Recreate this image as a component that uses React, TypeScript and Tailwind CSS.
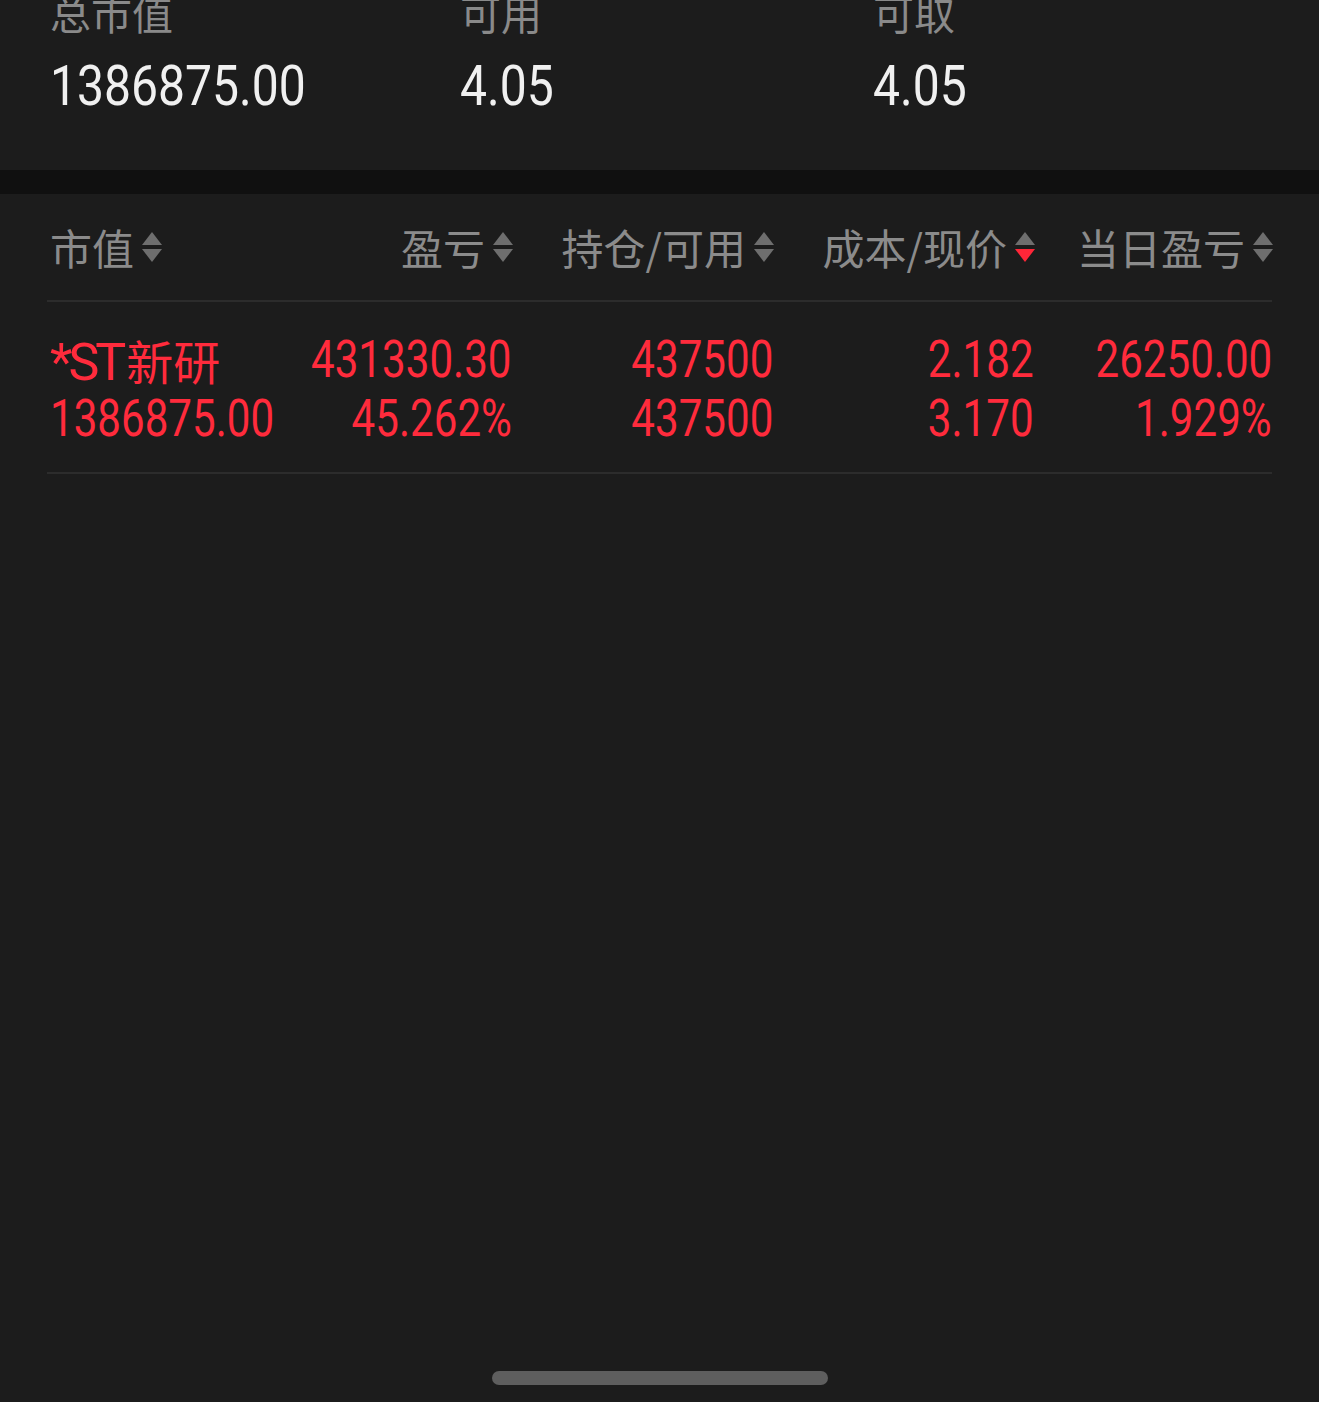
import React from 'react';

const NUM_FONT = "'Roboto', 'Noto Sans CJK SC', sans-serif";
const CJK_FONT = "'Noto Sans CJK SC', 'Noto Sans', sans-serif";

type SortState = 'none' | 'desc';

/* Stacked up/down triangles next to a column title. */
function SortIcon({ state = 'none' }: { state?: SortState }) {
  return (
    <svg width="22" height="36" viewBox="0 0 22 36" className="mr-[-2px] ml-[7px] shrink-0">
      <path d="M11 3 L21 16 L1 16 Z" fill="#6e6e6e" />
      <path d="M1 20 L21 20 L11 33 Z" fill={state === 'desc' ? '#ff2638' : '#6e6e6e'} />
    </svg>
  );
}

function HeaderCell({
  label,
  state,
  align = 'right',
}: {
  label: string;
  state?: SortState;
  align?: 'left' | 'right';
}) {
  return (
    <div className={`flex items-center ${align === 'left' ? 'justify-start' : 'justify-end'}`}>
      <span className="text-[42px] leading-[48px] text-[#8b8b8b]" style={{ fontFamily: CJK_FONT }}>
        {label}
      </span>
      <SortIcon state={state} />
    </div>
  );
}

const summary = [
  { label: '总市值', value: '1386875.00' },
  { label: '可用', value: '4.05' },
  { label: '可取', value: '4.05' },
];

const position = {
  code: '*ST',
  short: '新研',
  marketValue: '1386875.00',
  pnl: '431330.30',
  pnlPct: '45.262%',
  hold: '437500',
  avail: '437500',
  cost: '2.182',
  price: '3.170',
  dayPnl: '26250.00',
  dayPct: '1.929%',
};

// the app uses a condensed DIN face; squeeze Roboto to get the same proportions
function Num({ children, left = false }: { children: React.ReactNode; left?: boolean }) {
  return (
    <span className={`inline-block scale-x-[0.81] ${left ? 'origin-left' : 'origin-right'}`}>{children}</span>
  );
}

function Cell({ top, bottom }: { top: string; bottom: string }) {
  return (
    <div className="flex flex-col items-end">
      <div className="h-[59px] whitespace-nowrap text-[52px] leading-[59px]">
        <Num>{top}</Num>
      </div>
      <div className="h-[59px] whitespace-nowrap text-[52px] leading-[59px]">
        <Num>{bottom}</Num>
      </div>
    </div>
  );
}

export default function App() {
  return (
    <div className="flex h-[1402px] w-[1319px] flex-col overflow-hidden bg-[#1c1c1c]">
      {/* account summary, top clipped by the scroll position */}
      <div className="h-[170px] shrink-0 pl-[50px]">
        <div className="grid grid-cols-[410px_413px_1fr]">
          {summary.map((s) => (
            <div key={s.label} className="flex flex-col">
              <div
                className="mt-[-12px] h-[48px] text-[41px] leading-[48px] text-[#8a8a8a]"
                style={{ fontFamily: CJK_FONT }}
              >
                {s.label}
              </div>
              <div
                className="mt-[22px] h-[56px] whitespace-nowrap text-[56px] leading-[56px] text-[#f0f0f0]"
                style={{ fontFamily: NUM_FONT }}
              >
                <span className="inline-block origin-left scale-x-[0.858]">{s.value}</span>
              </div>
            </div>
          ))}
        </div>
      </div>

      <div className="h-[24px] shrink-0 bg-[#101010]" />

      {/* positions table */}
      <div className="px-[47px]">
        <div className="grid h-[108px] grid-cols-[262px_200px_261px_261px_1fr] items-center border-b-2 border-[#2c2c2c] pl-[3px]">
          <HeaderCell label="市值" align="left" />
          <HeaderCell label="盈亏" />
          <HeaderCell label="持仓/可用" />
          <HeaderCell label="成本/现价" state="desc" />
          <HeaderCell label="当日盈亏" />
        </div>

        <div
          className="grid grid-cols-[262px_200px_261px_261px_1fr] border-b-2 border-[#2c2c2c] pt-[28px] pb-[24px] pl-[3px] text-[#ff2b3c]"
          style={{ fontFamily: NUM_FONT }}
        >
          <div className="flex flex-col items-start">
            <div className="flex h-[59px] items-baseline whitespace-nowrap leading-[59px]">
              <span className="text-[52px] tracking-[-4px]">{position.code}</span>
              <span className="ml-[4px] text-[47px]" style={{ fontFamily: CJK_FONT }}>
                {position.short}
              </span>
            </div>
            <div className="h-[59px] whitespace-nowrap text-[52px] leading-[59px]">
              <Num left>{position.marketValue}</Num>
            </div>
          </div>
          <Cell top={position.pnl} bottom={position.pnlPct} />
          <Cell top={position.hold} bottom={position.avail} />
          <Cell top={position.cost} bottom={position.price} />
          <Cell top={position.dayPnl} bottom={position.dayPct} />
        </div>
      </div>

      <div className="flex-1" />

      {/* home indicator */}
      <div className="flex justify-center pb-[17px]">
        <div className="h-[14px] w-[336px] rounded-full bg-[#5e5e5e]" />
      </div>
    </div>
  );
}
